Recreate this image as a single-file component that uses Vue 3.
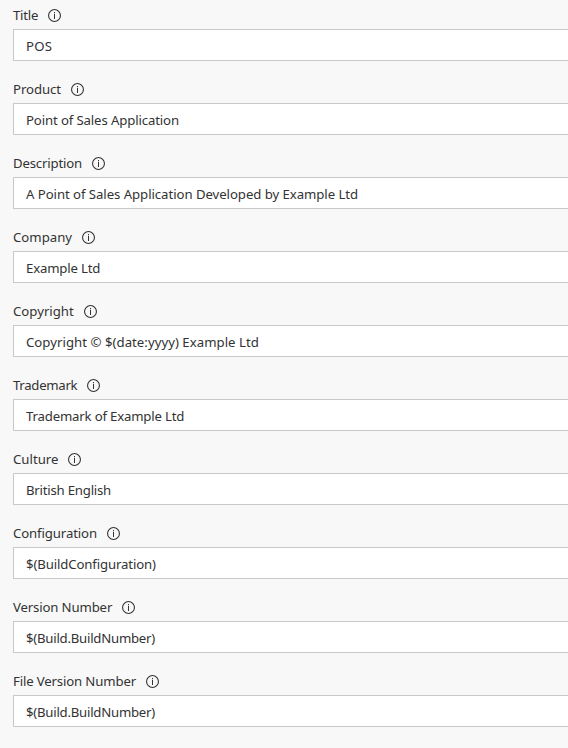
<script setup>
import { reactive } from 'vue'

// labelWidth is in pixels; the tracking values are letter spacing in pixels.
const fields = reactive([
  { id: 'title', label: 'Title', labelWidth: 25, labelTracking: -0.25, value: 'POS', tracking: 0.2 },
  { id: 'product', label: 'Product', labelWidth: 48, labelTracking: -0.07, value: 'Point of Sales Application', tracking: -0.13 },
  { id: 'description', label: 'Description', labelWidth: 69, labelTracking: -0.18, value: 'A Point of Sales Application Developed by Example Ltd', tracking: -0.06 },
  { id: 'company', label: 'Company', labelWidth: 59, labelTracking: 0, value: 'Example Ltd', tracking: -0.18 },
  { id: 'copyright', label: 'Copyright', labelWidth: 61, labelTracking: 0, value: 'Copyright © $(date:yyyy) Example Ltd', tracking: 0.03 },
  { id: 'trademark', label: 'Trademark', labelWidth: 64, labelTracking: -0.3, value: 'Trademark of Example Ltd', tracking: -0.18 },
  { id: 'culture', label: 'Culture', labelWidth: 45, labelTracking: 0, value: 'British English', tracking: -0.22 },
  { id: 'configuration', label: 'Configuration', labelWidth: 84, labelTracking: -0.12, value: '$(BuildConfiguration)', tracking: -0.13 },
  { id: 'version', label: 'Version Number', labelWidth: 99, labelTracking: -0.15, value: '$(Build.BuildNumber)', tracking: -0.24 },
  { id: 'file-version', label: 'File Version Number', labelWidth: 123, labelTracking: -0.15, value: '$(Build.BuildNumber)', tracking: -0.24 },
])
</script>

<template>
  <form class="form" @submit.prevent>
    <div v-for="field in fields" :key="field.id" class="field">
      <div class="heading">
        <label
          class="label"
          :for="field.id"
          :style="{ width: field.labelWidth + 'px', letterSpacing: field.labelTracking + 'px' }"
        >{{ field.label }}</label>
        <svg class="info" viewBox="0 0 13 13" aria-hidden="true">
          <circle cx="6.5" cy="6.5" r="5.95" fill="none" stroke="currentColor" stroke-width="1.1" />
          <path d="M6 3h1v1.2H6zM6 5h1v5H6z" fill="currentColor" />
        </svg>
      </div>
      <input
        :id="field.id"
        v-model="field.value"
        class="input"
        type="text"
        spellcheck="false"
        :style="{ letterSpacing: field.tracking + 'px' }"
      />
    </div>
  </form>
</template>

<style>
body {
  background: #f8f8f8;
  overflow: hidden;
}
</style>

<style scoped>
.form {
  box-sizing: border-box;
  height: 748px;
  padding: 2px 0 0 13px;
  display: flex;
  flex-direction: column;
  gap: 15px;
  overflow: hidden;
  background: #f8f8f8;
  color: #333;
  font-family: "Segoe UI", "Noto Sans", sans-serif;
  font-size: 13.2px;
}

.field {
  flex: none;
  display: flex;
  flex-direction: column;
}

.heading {
  height: 27px;
  display: flex;
  align-items: center;
  gap: 10px;
}

.label {
  flex: none;
  line-height: 27px;
  white-space: nowrap;
}

.info {
  flex: none;
  width: 13px;
  height: 13px;
}

.input {
  box-sizing: border-box;
  width: 100%;
  height: 32px;
  margin: 0;
  padding: 2px 12px 0;
  border: 1px solid #c8c8c8;
  border-right: 0;
  border-radius: 0;
  outline: none;
  background: #fff;
  color: #333;
  font: inherit;
}
</style>
